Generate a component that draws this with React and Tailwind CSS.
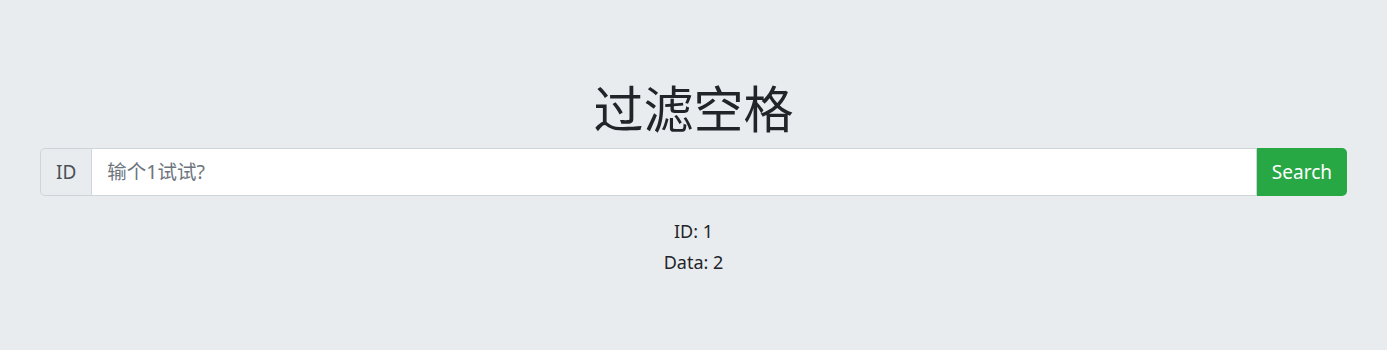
import React from 'react';

const App = () => {
  return (
    <div
      className="min-h-[350px] bg-[#e9ecef] text-[#212529] px-[40px] pt-[76px]"
      style={{ fontFamily: '"Noto Sans", "Noto Sans CJK SC", sans-serif' }}
    >
      <h1
        className="text-center text-[50px] leading-[60px] font-normal mb-[12px]"
        style={{ fontFamily: '"Noto Sans CJK SC", sans-serif' }}
      >
        过滤空格
      </h1>

      {/* Search bar */}
      <div className="flex h-[48px] text-[19px]">
        <span className="flex items-center px-[15px] bg-[#e9ecef] border border-[#ced4da] rounded-l-[5px] text-[#495057]">
          ID
        </span>
        <input
          type="text"
          placeholder="输个1试试?"
          className="flex-1 min-w-0 bg-white border border-l-0 border-[#ced4da] px-[15px] text-[19.5px] text-[#495057] placeholder-[#6c757d] outline-none"
        />
        <button className="px-[15px] bg-[#28a745] text-white rounded-r-[5px]">
          Search
        </button>
      </div>

      {/* Result */}
      <div className="mt-[22px] flex flex-col items-center gap-[4px] text-[18px] leading-[27px]">
        <div>ID: 1</div>
        <div>Data: 2</div>
      </div>
    </div>
  );
};

export default App;
